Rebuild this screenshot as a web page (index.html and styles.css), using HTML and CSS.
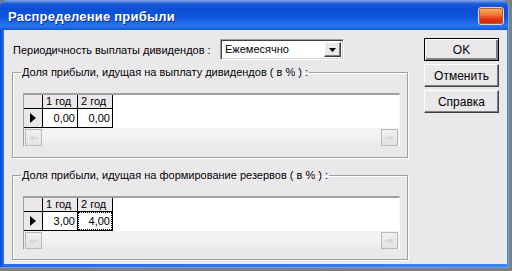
FILE: index.html
```html
<!DOCTYPE html>
<html>
<head>
<meta charset="utf-8">
<link rel="stylesheet" href="styles.css">
</head>
<body>
<div class="window">
  <div class="titlebar">
    <span class="title">Распределение прибыли</span>
    <span class="close"></span>
  </div>
  <div class="client">
    <div class="main">
      <div class="period-row">
        <span class="period-label">Периодичность выплаты дивидендов :</span>
        <div class="combo">
          <span class="combo-text">Ежемесячно</span>
          <span class="combo-btn"><svg width="7" height="4" viewBox="0 0 7 4"><path d="M0 0h7L3.5 4z" fill="#000"/></svg></span>
        </div>
      </div>
      <fieldset class="group">
        <legend>Доля прибыли, идущая на выплату дивидендов ( в % ) :</legend>
        <div class="grid">
          <div class="grid-body">
            <table class="gtable">
              <tr class="hrow"><td class="ind"></td><td class="hcell">1 год</td><td class="hcell">2 год</td></tr>
              <tr class="drow"><td class="ind"><svg width="6" height="10" viewBox="0 0 6 10"><path d="M0 0L6 5L0 10z" fill="#000"/></svg></td><td class="dcell">0,00</td><td class="dcell">0,00</td></tr>
            </table>
          </div>
          <div class="hscroll">
            <span class="sbtn"><svg width="9" height="8" viewBox="0 0 9 8"><path d="M0 4L4 1V3H9V5H4V7z" fill="#d6d6d6"/></svg></span>
            <span class="sbtn"><svg width="9" height="8" viewBox="0 0 9 8"><path d="M9 4L5 1V3H0V5H5V7z" fill="#d6d6d6"/></svg></span>
          </div>
        </div>
      </fieldset>
      <fieldset class="group group2">
        <legend>Доля прибыли, идущая на формирование резервов ( в % ) :</legend>
        <div class="grid">
          <div class="grid-body">
            <table class="gtable">
              <tr class="hrow"><td class="ind"></td><td class="hcell">1 год</td><td class="hcell">2 год</td></tr>
              <tr class="drow"><td class="ind"><svg width="6" height="10" viewBox="0 0 6 10"><path d="M0 0L6 5L0 10z" fill="#000"/></svg></td><td class="dcell">3,00</td><td class="dcell focus"><span class="focus-box">4,00</span></td></tr>
            </table>
          </div>
          <div class="hscroll">
            <span class="sbtn"><svg width="9" height="8" viewBox="0 0 9 8"><path d="M0 4L4 1V3H9V5H4V7z" fill="#d6d6d6"/></svg></span>
            <span class="sbtn"><svg width="9" height="8" viewBox="0 0 9 8"><path d="M9 4L5 1V3H0V5H5V7z" fill="#d6d6d6"/></svg></span>
          </div>
        </div>
      </fieldset>
    </div>
    <div class="buttons">
      <button class="btn btn-default">OK</button>
      <button class="btn">Отменить</button>
      <button class="btn">Справка</button>
    </div>
  </div>
</div>
</body>
</html>
```

FILE: styles.css
```css
html, body {
  margin: 0;
  padding: 0;
}
body {
  width: 512px;
  height: 271px;
  background: #7f7f7f;
  font-family: "Liberation Sans", Arial, sans-serif;
  font-size: 11px;
  color: #000;
  overflow: hidden;
}
.window {
  width: 509px;
  height: 268px;
  box-sizing: border-box;
  display: flex;
  flex-direction: column;
  background: linear-gradient(to right, #0b45d6 0, #2a6ae6 3px, #3a86f0 100%);
  border-radius: 7px 7px 0 0;
  border-right: 1px solid #6aa0f2;
  border-bottom: 1px solid #6aa0f2;
}
.titlebar {
  height: 30px;
  flex: none;
  display: flex;
  align-items: center;
  justify-content: space-between;
  padding: 0 4px 0 8px;
  border-radius: 7px 7px 0 0;
  background: linear-gradient(to bottom, #8aa6e0 0, #4a80e6 2px, #1a5ad8 4px, #0c4fd4 9px, #0b55dc 16px, #1c68ea 22px, #2a74ee 26px, #1356d8 30px);
}
.title {
  color: #fff;
  font-weight: bold;
  font-size: 13px;
  letter-spacing: 0.2px;
  text-shadow: 1px 1px 0 #0b2a8a;
  margin-top: 2px;
}
.close {
  width: 26px;
  height: 18px;
  box-sizing: border-box;
  border: 1px solid #d9d2e8;
  border-radius: 3px;
  background: linear-gradient(to bottom, #f7b462 0, #f07a3a 40%, #e02810 75%, #c83010 100%);
  box-shadow: inset 0 0 0 1px #b85a30;
  margin-top: 2px;
}
.client {
  flex: 1;
  margin: 0 1px 3px 4px;
  background: #ebe8ec;
  display: flex;
  gap: 16px;
  padding: 8px 8px 0 8px;
}
.main {
  width: 396px;
  flex: none;
  display: flex;
  flex-direction: column;
}
.period-row {
  display: flex;
  align-items: center;
  height: 21px;
  margin-top: 1px;
}
.period-label {
  width: 207px;
  padding-left: 1px;
}
.combo {
  width: 124px;
  height: 21px;
  box-sizing: border-box;
  display: flex;
  align-items: center;
  justify-content: space-between;
  background: #fff;
  border: 1px solid;
  border-color: #a0a0a0 #fff #fff #a0a0a0;
  box-shadow: inset 1px 1px 0 #404040, inset -1px -1px 0 #d4d0c8;
  padding: 2px 2px 2px 4px;
}
.combo-text {
  line-height: 15px;
}
.combo-btn {
  width: 17px;
  height: 15px;
  box-sizing: border-box;
  display: flex;
  align-items: center;
  justify-content: center;
  background: #ebe8ec;
  border: 1px solid;
  border-color: #fff #404040 #404040 #fff;
  box-shadow: inset -1px -1px 0 #808080;
}
.group {
  margin: 6px 0 0 0;
  padding: 14px 7px 10px 10px;
  border: 1px solid #a0a0a0;
  box-shadow: inset 1px 1px 0 #fff, 1px 1px 0 #fff;
  min-inline-size: 0;
}
.group2 {
  margin-top: 11px;
  padding-bottom: 9px;
}
.group legend {
  padding: 0 1px;
  margin-left: -2px;
  line-height: 13px;
}
.grid {
  height: 54px;
  box-sizing: border-box;
  border-style: solid;
  border-width: 2px 1px 1px 1px;
  border-color: #a0a0a0 #fafafa #fafafa #a0a0a0;
  display: flex;
  flex-direction: column;
  background: #fff;
}
.grid-body {
  flex: 1;
  background: #fff;
}
.gtable {
  border-collapse: collapse;
  border-spacing: 0;
}
.gtable td {
  padding: 0;
  border-right: 1px solid #000;
  border-bottom: 1px solid #000;
}
.hrow td {
  height: 13px;
  line-height: 13px;
}
.drow td {
  height: 18px;
  line-height: 18px;
}
.ind {
  width: 18px;
  background: #ebe8ec;
  text-align: center;
}
.ind svg {
  display: block;
  margin: 0 auto;
}
.hcell {
  width: 34px;
  background: #ebe8ec;
  text-align: left;
  padding-left: 3px !important;
  width: 31px;
}
.dcell {
  width: 34px;
  text-align: right;
  padding-right: 2px !important;
  width: 32px;
  background: #fff;
}
.focus {
  padding-right: 0 !important;
  padding-left: 0 !important;
}
.focus-box {
  display: block;
  height: 16px;
  line-height: 16px;
  border: 1px dotted #000;
  padding-right: 1px;
}
.hscroll {
  height: 19px;
  flex: none;
  display: flex;
  justify-content: space-between;
  align-items: center;
  background: linear-gradient(to bottom, #f4f4f4 0, #f2f2f2 50%, #e9e9e9 100%);
  padding: 0 1px;
}
.sbtn {
  width: 17px;
  height: 17px;
  box-sizing: border-box;
  display: flex;
  align-items: center;
  justify-content: center;
  border: 1px solid #b9b9b9;
  background: linear-gradient(to bottom, #f0f0f0, #e2e2e2);
}
.buttons {
  width: 75px;
  display: flex;
  flex-direction: column;
  gap: 3px;
}
.btn {
  width: 75px;
  height: 23px;
  box-sizing: border-box;
  font-family: "Liberation Sans", Arial, sans-serif;
  font-size: 12px;
  color: #000;
  background: #ebe8ec;
  border: 1px solid;
  border-color: #fff #404040 #404040 #fff;
  box-shadow: inset -1px -1px 0 #808080;
  padding: 0;
}
.btn-default {
  border: 1px solid #000;
  box-shadow: inset 1px 1px 0 #fff, inset -2px -2px 0 #808080;
}
```
